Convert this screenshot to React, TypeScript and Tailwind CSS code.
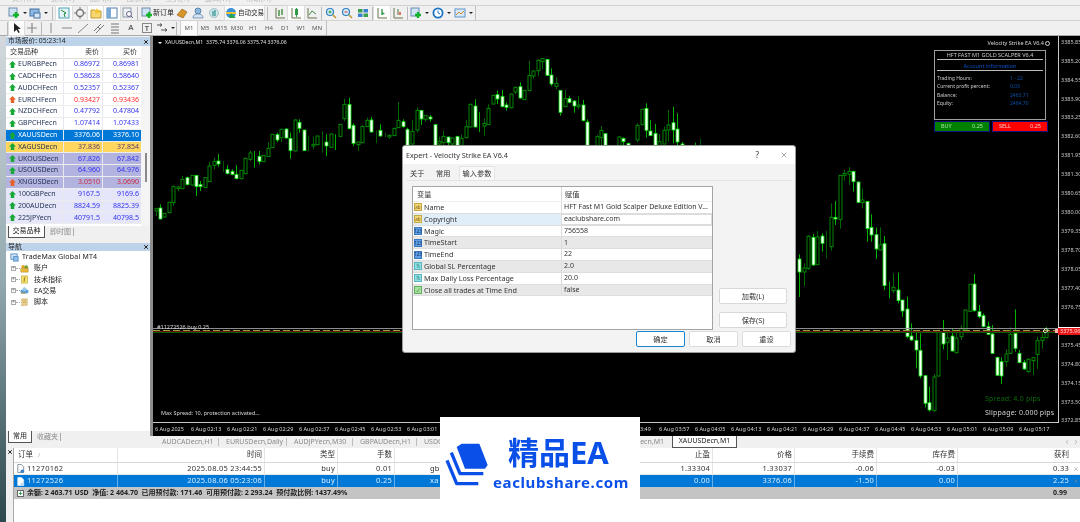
import type { ReactNode } from "react";
import { ChevronLeft, ChevronRight, X } from "lucide-react";

type Kind = "w" | "h" | "b" | "d";
type Candle = [number, number, number, number, number, Kind];

// candle rows were read off 3x crops, so each block has its own origin
const leftCandles: Candle[] = [
  [18, 515, 518, 525, 540, "h"], [30, 505, 516, 549, 550, "w"], [43, 530, 532, 543, 545, "h"], [57, 497, 499, 530, 532, "h"],
  [70, 448, 452, 500, 510, "h"], [84, 450, 453, 458, 465, "h"], [97, 420, 430, 458, 460, "h"], [111, 422, 425, 446, 448, "w"],
  [125, 418, 418, 447, 450, "h"], [138, 418, 418, 452, 480, "w"], [151, 435, 445, 452, 465, "w"], [165, 425, 425, 455, 456, "h"],
  [178, 377, 390, 437, 438, "h"], [192, 365, 376, 388, 400, "h"], [205, 354, 375, 384, 392, "w"], [218, 375, 390, 392, 408, "d"],
  [232, 388, 400, 413, 415, "w"], [245, 400, 406, 415, 418, "w"], [259, 388, 415, 428, 430, "w"], [273, 402, 403, 428, 430, "h"],
  [286, 365, 367, 413, 415, "h"], [300, 343, 351, 370, 375, "h"], [313, 345, 352, 356, 395, "b"], [327, 345, 361, 376, 385, "w"],
  [340, 357, 358, 377, 378, "h"], [354, 318, 337, 362, 363, "h"], [367, 295, 295, 335, 336, "h"], [381, 290, 296, 312, 318, "w"],
  [394, 278, 280, 305, 318, "h"], [408, 277, 279, 306, 308, "w"], [421, 290, 307, 344, 368, "w"], [435, 250, 252, 345, 346, "h"],
  [448, 250, 259, 277, 290, "w"], [462, 282, 282, 344, 345, "w"], [475, 300, 340, 344, 345, "d"], [489, 303, 325, 330, 340, "h"],
  [502, 299, 300, 326, 328, "h"], [516, 285, 311, 315, 350, "d"], [529, 295, 318, 330, 360, "w"], [543, 292, 294, 334, 335, "h"],
  [556, 295, 296, 298, 342, "b"], [570, 265, 265, 301, 302, "h"], [583, 188, 205, 248, 255, "h"], [597, 185, 205, 278, 280, "w"],
  [610, 262, 268, 322, 330, "w"], [624, 318, 318, 326, 345, "h"], [637, 268, 271, 320, 322, "h"], [651, 245, 253, 272, 273, "h"],
  [664, 243, 252, 288, 290, "w"], [678, 284, 285, 289, 322, "d"], [691, 265, 283, 300, 302, "w"], [705, 290, 294, 300, 304, "d"],
  [718, 295, 298, 303, 308, "h"], [732, 275, 277, 299, 300, "h"], [745, 198, 253, 275, 276, "h"], [759, 250, 257, 272, 275, "w"],
  [772, 275, 280, 330, 335, "w"],
];

const topCandles: Candle[] = [
  [36, 210, 244, 282, 284, "h"], [50, 172, 181, 240, 248, "h"], [63, 180, 181, 207, 225, "w"], [76, 195, 196, 208, 215, "h"],
  [90, 195, 201, 207, 215, "w"], [104, 222, 224, 300, 300, "w"], [117, 260, 274, 282, 300, "h"], [130, 243, 259, 278, 290, "h"],
  [144, 260, 261, 278, 285, "w"], [157, 263, 264, 282, 290, "h"], [171, 258, 259, 300, 300, "w"], [184, 253, 265, 300, 300, "h"],
  [198, 210, 230, 263, 265, "h"], [211, 160, 163, 231, 232, "h"], [225, 148, 168, 231, 232, "w"], [238, 186, 228, 233, 246, "b"],
  [252, 205, 220, 228, 257, "h"], [265, 163, 175, 224, 225, "h"], [279, 135, 136, 162, 163, "h"], [292, 122, 134, 147, 162, "w"],
  [306, 120, 139, 170, 172, "w"], [319, 157, 165, 172, 182, "w"], [333, 130, 132, 173, 176, "h"], [346, 110, 112, 126, 132, "h"],
  [360, 97, 110, 144, 146, "w"], [373, 120, 121, 149, 150, "h"], [387, 33, 76, 122, 123, "h"], [400, 60, 63, 78, 86, "h"],
  [414, 28, 31, 62, 78, "h"], [427, 24, 26, 35, 58, "h"], [441, 27, 28, 76, 78, "w"], [454, 55, 75, 102, 108, "w"],
  [468, 82, 100, 109, 118, "h"], [481, 120, 121, 187, 197, "w"], [495, 120, 145, 170, 172, "h"], [508, 137, 146, 157, 160, "w"],
  [522, 150, 153, 168, 188, "w"], [535, 138, 165, 170, 178, "h"], [549, 150, 165, 212, 214, "w"], [562, 208, 216, 300, 300, "w"],
  [590, 255, 260, 300, 300, "h"], [603, 228, 241, 263, 290, "h"], [616, 250, 251, 300, 300, "w"], [657, 258, 261, 300, 300, "h"],
  [670, 262, 265, 275, 290, "w"], [684, 278, 280, 300, 300, "w"], [711, 220, 226, 270, 276, "h"], [725, 177, 178, 224, 226, "h"],
  [738, 160, 175, 241, 263, "w"], [751, 210, 243, 257, 258, "w"], [765, 222, 250, 300, 300, "w"], [778, 252, 275, 300, 300, "h"],
  [792, 230, 241, 282, 283, "h"], [805, 180, 225, 240, 275, "h"], [819, 170, 218, 240, 280, "w"], [832, 190, 237, 276, 300, "w"],
  [846, 276, 282, 300, 300, "w"], [886, 278, 280, 300, 300, "b"], [900, 267, 268, 300, 300, "d"],
];

const riseCandles: Candle[] = [
  [57, 403, 417, 456, 531, "w"], [71, 430, 444, 456, 498, "h"], [84, 345, 349, 445, 450, "h"], [98, 342, 352, 435, 438, "w"],
  [111, 333, 351, 434, 435, "h"], [125, 340, 348, 370, 395, "w"], [138, 332, 370, 375, 415, "d"], [152, 250, 292, 380, 392, "h"],
  [165, 243, 292, 297, 315, "w"], [179, 165, 166, 298, 326, "h"], [192, 150, 160, 166, 182, "h"], [206, 141, 154, 163, 195, "h"],
  [219, 152, 154, 185, 215, "w"], [233, 185, 186, 247, 250, "w"], [246, 205, 240, 248, 265, "h"], [260, 243, 244, 326, 365, "w"],
  [273, 283, 322, 345, 365, "w"], [287, 323, 344, 387, 416, "w"], [300, 322, 375, 390, 392, "h"], [313, 348, 371, 497, 510, "w"],
];

const fallCandles: Candle[] = [
  [297, 35, 52, 55, 85, "b"], [310, 10, 52, 62, 70, "h"], [324, 8, 60, 92, 100, "w"], [337, 90, 90, 123, 140, "w"],
  [351, 80, 117, 200, 205, "w"], [364, 160, 198, 210, 213, "w"], [378, 180, 211, 240, 295, "w"], [391, 190, 241, 318, 325, "w"],
  [405, 315, 317, 400, 412, "w"], [418, 350, 398, 420, 425, "w"], [432, 312, 321, 422, 425, "h"], [445, 183, 187, 318, 320, "h"],
  [459, 150, 187, 222, 238, "w"], [472, 188, 204, 218, 270, "h"], [486, 175, 198, 243, 245, "w"], [499, 180, 204, 248, 250, "h"],
  [513, 165, 175, 200, 210, "h"], [526, 120, 120, 180, 182, "h"], [540, 42, 43, 124, 125, "h"], [553, 12, 42, 122, 125, "w"],
  [567, 105, 125, 140, 145, "w"], [580, 130, 137, 170, 172, "w"], [594, 155, 170, 193, 195, "w"], [607, 165, 192, 250, 252, "w"],
  [621, 260, 262, 316, 318, "w"], [634, 262, 275, 318, 342, "w"], [648, 238, 252, 275, 290, "h"], [661, 172, 193, 250, 252, "h"],
  [675, 118, 190, 235, 245, "w"], [688, 240, 250, 278, 280, "w"], [702, 270, 277, 297, 300, "w"], [715, 265, 268, 305, 308, "h"],
  [729, 262, 263, 272, 315, "h"], [742, 200, 212, 253, 296, "h"], [756, 190, 202, 212, 236, "h"], [769, 170, 175, 203, 205, "h"],
];

const quotes = [
  { s: "EURGBPecn", b: "0.86972", a: "0.86981", up: true, row: "n" },
  { s: "CADCHFecn", b: "0.58628", a: "0.58640", up: true, row: "n" },
  { s: "AUDCHFecn", b: "0.52357", a: "0.52367", up: true, row: "n" },
  { s: "EURCHFecn", b: "0.93427", a: "0.93436", up: false, row: "n" },
  { s: "NZDCHFecn", b: "0.47792", a: "0.47804", up: true, row: "n" },
  { s: "GBPCHFecn", b: "1.07414", a: "1.07433", up: true, row: "n" },
  { s: "XAUUSDecn", b: "3376.06", a: "3376.10", up: true, row: "sel" },
  { s: "XAGUSDecn", b: "37.836", a: "37.854", up: true, row: "gold" },
  { s: "UKOUSDecn", b: "67.826", a: "67.842", up: true, row: "oil" },
  { s: "USOUSDecn", b: "64.960", a: "64.976", up: true, row: "oil" },
  { s: "XNGUSDecn", b: "3.0510", a: "3.0690", up: false, row: "oil" },
  { s: "100GBPecn", b: "9167.5", a: "9169.6", up: true, row: "idx" },
  { s: "200AUDecn", b: "8824.59", a: "8825.39", up: true, row: "idx" },
  { s: "225JPYecn", b: "40791.5", a: "40798.5", up: true, row: "idx" },
];

const rowBg: Record<string, string> = {
  n: "bg-white",
  sel: "bg-[#0078d7] text-white",
  gold: "bg-[#ffd75e]",
  oil: "bg-[#b3b3e0]",
  idx: "bg-[#e6e6fa]",
};

const params = [
  { t: "ab", n: "Name", v: "HFT Fast M1 Gold Scalper Deluxe Edition V...", bg: "bg-white" },
  { t: "ab", n: "Copyright", v: "eaclubshare.com", bg: "bg-white", edit: true },
  { t: "123", n: "Magic", v: "756558", bg: "bg-white" },
  { t: "123", n: "TimeStart", v: "1", bg: "bg-[#e8e8e8]" },
  { t: "123", n: "TimeEnd", v: "22", bg: "bg-white" },
  { t: "½", n: "Global SL Percentage", v: "2.0", bg: "bg-[#e8e8e8]" },
  { t: "½", n: "Max Daily Loss Percentage", v: "20.0", bg: "bg-white" },
  { t: "✓", n: "Close all trades at Time End", v: "false", bg: "bg-[#e8e8e8]" },
];

const paramTag: Record<string, string> = {
  ab: "bg-[#f0d878] text-[#7a5a10] border-[#c8a840]",
  "123": "bg-[#5f9fe0] text-[#103070] border-[#3a78c0]",
  "½": "bg-[#8fdde0] text-[#106070] border-[#58b8c0]",
  "✓": "bg-[#a8e0a0] text-[#106010] border-[#60b060]",
};

// 3376.10 sits under the red bid tag
const prices = ["3385.85", "3385.20", "3384.55", "3383.90", "3383.25", "3382.60", "3381.95", "3381.30", "3380.65", "3380.00", "3379.35", "3378.70", "3378.05", "3377.40", "3376.75", "", "3375.45", "3374.80", "3374.15", "3373.50", "3372.85"];
// labels under the logo are left out, 03:49 only shows its tail
const times = ["6 Aug 02:13", "6 Aug 02:21", "6 Aug 02:29", "6 Aug 02:37", "6 Aug 02:45", "6 Aug 02:53", "6 Aug 03:01", "6 Aug 03:09", "", "", "", "", "", "6 Aug 03:57", "6 Aug 04:05", "6 Aug 04:13", "6 Aug 04:21", "6 Aug 04:29", "6 Aug 04:37", "6 Aug 04:45", "6 Aug 04:53", "6 Aug 05:01", "6 Aug 05:09", "6 Aug 05:17"];

const orderCols = "grid grid-cols-[104px_147px_73px_57px_75px_80px_80px_83px_82px_82px_81px_122px]";

function Candles({ data, ox, oy }: { data: Candle[]; ox: number; oy: number }) {
  return (
    <>
      {data.map(([x, wt, bt, bb, wb, k]) => {
        const cx = Math.round(ox + x / 3) + 0.5;
        const y = (v: number) => oy + v / 3;
        const wick = k === "w" ? "#00b400" : k === "b" ? "#00b000" : k === "d" ? "#005800" : "#006a00";
        return (
          <g key={x}>
            <line x1={cx} x2={cx} y1={y(wt)} y2={y(wb)} stroke={wick} />
            {k === "w" && <rect x={cx - 1.5} y={y(bt)} width={3} height={y(bb) - y(bt)} fill="#fff" stroke="#00e000" strokeWidth={0.8} />}
            {k === "h" && <rect x={cx - 1.5} y={y(bt)} width={3} height={y(bb) - y(bt)} fill="#000" stroke="#009400" strokeWidth={0.9} />}
          </g>
        );
      })}
    </>
  );
}

function Ico({ children }: { children: ReactNode }) {
  return (
    <svg viewBox="0 0 12 12" className="w-[12px] h-[12px]">
      {children}
    </svg>
  );
}

function Tool({ children, on, caret, w = "w-[16px]" }: { children: ReactNode; on?: boolean; caret?: boolean; w?: string }) {
  return (
    <div className={`${w} h-[14px] shrink-0 flex items-center justify-center gap-[1px] ${on ? "bg-[#fdfdfd] outline outline-[#dcdcdc]" : ""}`}>
      {children}
      {caret && <span className="w-0 h-0 border-x-[2px] border-t-[2px] border-x-transparent border-t-[#222] ml-[2px]" />}
    </div>
  );
}

function Sep({ tight }: { tight?: boolean }) {
  return <div className={`w-[1px] h-[13px] bg-[#b9b9b9] shrink-0 ${tight ? "mx-[1px]" : "mx-[3px]"}`} />;
}

const docPlus = (
  <Ico>
    <rect x="1" y="1" width="8" height="8" fill="#cfe3f5" stroke="#6a8cae" />
    <path d="M8 5v6M5 8h6" stroke="#12b52a" strokeWidth="2.4" />
  </Ico>
);
const bars = (
  <Ico>
    <path d="M2 1v10h9" stroke="#67764f" fill="none" />
    <path d="M5 3v6M8 2v6" stroke="#3f8a3f" strokeWidth="1.4" />
  </Ico>
);

function TopToolbar() {
  return (
    <div className="h-[16px] flex items-center pl-[6px] bg-[#f0f0f0] border-y border-[#d2d2d2]">
      <Tool w="w-[22px]" caret>{docPlus}</Tool>
      <Tool w="w-[21px]" caret><Ico><rect x="1" y="2" width="9" height="7" fill="#8cb8e4" stroke="#46719f" /><rect x="5" y="6" width="6" height="5" fill="#d7e6f5" stroke="#46719f" /></Ico></Tool>
      <Sep />
      <Tool on><Ico><rect x="1" y="1" width="10" height="10" fill="#e4f3f8" stroke="#4da0b8" /><path d="M3 3l5 3-2 1 1 3" stroke="#1e8a36" fill="none" /></Ico></Tool>
      <Tool><Ico><circle cx="6" cy="6" r="3.5" fill="none" stroke="#777" strokeWidth="1.4" /><path d="M6 0v3M6 9v3M0 6h3M9 6h3" stroke="#777" /></Ico></Tool>
      <Tool on><Ico><path d="M1 3h4l1 1h5v7H1z" fill="#f6d770" stroke="#c09a30" /><path d="M7 1l1 2 2 .3-1.5 1.4.4 2L7 5.8 5.2 6.7l.4-2L4 3.3 6 3z" fill="#f2c230" /></Ico></Tool>
      <Tool on><Ico><rect x="1" y="1" width="10" height="10" fill="#fff" stroke="#4d7fae" /><rect x="1" y="1" width="4" height="10" fill="#78a8d8" /></Ico></Tool>
      <Tool><Ico><rect x="1" y="1" width="8" height="9" fill="#eef2f5" stroke="#8a9aa8" /><circle cx="7" cy="7" r="2.5" fill="#fff" stroke="#668" /><path d="M9 9l2 2" stroke="#668" /></Ico></Tool>
      <Sep tight />
      <div className="flex items-center gap-[0px] w-[33px] ml-[2px] shrink-0">
        {docPlus}
        <span className="text-[7px] text-[#222] whitespace-nowrap">新订单</span>
      </div>
      <Tool><Ico><path d="M1 8l5-6 5 3-4 6z" fill="#d8952a" stroke="#8a5a10" strokeWidth="0.6" /></Ico></Tool>
      <Tool><Ico><circle cx="6" cy="4" r="3" fill="#8db8e0" stroke="#3a6a9a" strokeWidth="0.7" /><path d="M1 11c0-3 2-4 5-4s5 1 5 4z" fill="#d4e4f4" stroke="#5a7ca0" strokeWidth="0.7" /></Ico></Tool>
      <Tool><Ico><circle cx="6" cy="6" r="4.5" fill="#cfe6ea" stroke="#7aa" strokeWidth="0.6" /><path d="M5 4v5M7 3v6" stroke="#2e8f8a" strokeWidth="1.2" /></Ico></Tool>
      <div className="h-[14px] w-[39px] ml-[3px] flex items-center gap-[1px] bg-[#fbfbfb] outline outline-[#dcdcdc] shrink-0">
        <Ico><circle cx="6" cy="6" r="5" fill="#3a8fd8" /><path d="M1 6h10" stroke="#f1c232" strokeWidth="2" /><path d="M6 6l5 5H4z" fill="#28a745" /></Ico>
        <span className="text-[6.5px] text-[#222] whitespace-nowrap">自动交易</span>
      </div>
      <Sep />
      <div className="w-[1px]" />
      <Tool>{bars}</Tool>
      <Tool on><Ico><path d="M2 1v10h9" stroke="#67764f" fill="none" /><rect x="5" y="2" width="3" height="6" fill="#2f9a4a" /><path d="M6.5 1v9" stroke="#2f9a4a" /></Ico></Tool>
      <Tool><Ico><path d="M2 1v10h9" stroke="#67764f" fill="none" /><path d="M3 8l3-4 4 3" stroke="#3f8a3f" fill="none" /></Ico></Tool>
      <Sep tight />
      <Tool><Ico><circle cx="5" cy="5" r="3.5" fill="#d6ecfb" stroke="#2f7fbf" strokeWidth="1.2" /><path d="M8 8l3 3" stroke="#c79a2a" strokeWidth="1.6" /><path d="M3.5 5h3M5 3.5v3" stroke="#16a02e" /></Ico></Tool>
      <Tool><Ico><circle cx="5" cy="5" r="3.5" fill="#d6ecfb" stroke="#2f7fbf" strokeWidth="1.2" /><path d="M8 8l3 3" stroke="#c79a2a" strokeWidth="1.6" /><path d="M3.5 5h3" stroke="#d03020" /></Ico></Tool>
      <Tool><Ico><rect x="1" y="2" width="4.5" height="3.5" fill="#38a050" /><rect x="6.5" y="2" width="4.5" height="3.5" fill="#3a80d0" /><rect x="1" y="6.5" width="4.5" height="3.5" fill="#3a80d0" /><rect x="6.5" y="6.5" width="4.5" height="3.5" fill="#38a050" /></Ico></Tool>
      <Sep tight />
      <Tool on><Ico><path d="M2 1v10h9" stroke="#67764f" fill="none" /><path d="M6 2v6" stroke="#2f9a4a" strokeWidth="1.3" /><path d="M6 5l3 1.5-3 1.5" fill="#2f9a4a" /></Ico></Tool>
      <Tool><Ico><path d="M2 1v10h9" stroke="#67764f" fill="none" /><path d="M6 2v6" stroke="#7a8a60" strokeWidth="1.3" /><path d="M8 5v3" stroke="#d04020" strokeWidth="1.4" /></Ico></Tool>
      <Sep tight />
      <Tool w="w-[21px]" caret>{docPlus}</Tool>
      <Tool w="w-[22px]" caret><Ico><circle cx="6" cy="6" r="4.6" fill="#fff" stroke="#1b74c4" strokeWidth="1.8" /><path d="M6 3.5V6l2 1" stroke="#1b74c4" fill="none" /></Ico></Tool>
      <Tool w="w-[22px]" caret><Ico><rect x="1" y="2" width="10" height="8" fill="#d5e8fb" stroke="#5d94c8" /><path d="M2 8l3-3 2 2 3-3" stroke="#d68a30" fill="none" /></Ico></Tool>
      <div className="w-[1px] h-[15px] bg-[#c0c0c0] ml-[1px]" />
    </div>
  );
}

function BottomToolbar() {
  return (
    <div className="h-[15px] flex items-center pl-[6px] bg-[#f0f0f0] border-b border-[#a8a8a8]">
      <Sep tight />
      <Tool w="w-[15px]" on><Ico><path d="M3 1v9l2.5-2.2L7.5 11l1.3-.7-2-3.2H10z" fill="#222" /></Ico></Tool>
      <Tool><Ico><path d="M6 1v10M1 6h10" stroke="#888" strokeWidth="1.2" /></Ico></Tool>
      <Sep tight />
      <Tool><Ico><path d="M6 1v10" stroke="#999" strokeWidth="1.2" /></Ico></Tool>
      <Tool><Ico><path d="M1 6h10" stroke="#999" strokeWidth="1.2" /></Ico></Tool>
      <Tool><Ico><path d="M1 11L11 2" stroke="#888" /></Ico></Tool>
      <Tool><Ico><path d="M1 9L8 2M3 11l8-8M5 5l2 2" stroke="#777" /></Ico></Tool>
      <Tool><Ico><path d="M2 2h8M2 5h8M2 8h8M2 11h8" stroke="#777" /></Ico></Tool>
      <Tool><span className="text-[8px] font-bold text-[#666] leading-none font-['Liberation_Sans']">A</span></Tool>
      <Tool><div className="w-[10px] h-[10px] border border-[#888] flex items-center justify-center text-[7px] font-bold text-[#555] leading-none font-['Liberation_Sans']">T</div></Tool>
      <Tool w="w-[20px]" caret><Ico><path d="M1 3h5M6 3l-2-1.5M6 3L4 4.5M5 8h6M11 8L9 6.5M11 8L9 9.5" stroke="#555" /></Ico></Tool>
      <Sep tight />
      <div className="flex items-center ml-[3px]">
        {["M1", "M5", "M15", "M30", "H1", "H4", "D1", "W1", "MN"].map((t, i) => (
          <div key={t} className={`w-[16px] h-[14px] flex items-center justify-center text-[6px] text-[#555] ${i === 0 ? "bg-[#fbfbfb] outline outline-[#d0d0d0]" : ""}`}>{t}</div>
        ))}
      </div>
      <div className="w-[1px] h-[14px] bg-[#c0c0c0] ml-[1px]" />
    </div>
  );
}

function Arrow({ up }: { up: boolean }) {
  const c = up ? "#18a838" : "#e8602a";
  return (
    <svg viewBox="0 0 8 8" className="w-[7px] h-[7px] shrink-0">
      <path d="M4 0l4 4H6v4H2V4H0z" fill={c} />
    </svg>
  );
}

function MarketWatch() {
  return (
    <div className="h-[202px] shrink-0 flex flex-col">
      <div className="h-[9px] mt-[1px] bg-[#bcd3ea] flex items-center justify-between pl-[2px] pr-[1px] shrink-0">
        <span className="text-[6.8px] text-[#222]">市场报价: 05:23:14</span>
        <X size={6} strokeWidth={4} className="text-[#222]" />
      </div>
      <div className="flex flex-1 bg-white min-h-0">
        <div className="w-[135px] flex flex-col">
          <div className="h-[13px] flex text-[7px] text-[#333] items-center border-b border-[#dedede] shrink-0">
            <div className="w-[57px] pl-[4px]">交易品种</div>
            <div className="w-[39px] text-right pr-[3px] border-l border-[#e8e8e8]">卖价</div>
            <div className="w-[39px] text-right pr-[4px] border-l border-[#e8e8e8]">买价</div>
          </div>
          {quotes.map((q) => (
            <div key={q.s} className={`h-[11.8px] shrink-0 flex items-center text-[7px] border-b border-[#ececec] ${rowBg[q.row]}`}>
              <div className={`w-[57px] pl-[3px] flex items-center gap-[2px] ${q.row === "sel" ? "text-white" : "text-[#1f2f4f]"}`}>
                <Arrow up={q.up} />
                <span>{q.s}</span>
              </div>
              {[q.b, q.a].map((p, i) => (
                <div key={i} className={`w-[39px] pr-[2px] text-right border-l border-[#e8e8f0] ${q.row === "sel" ? "text-white" : q.row === "gold" ? "text-[#5a3a70]" : q.up ? "text-[#3333ee]" : q.row === "oil" ? "text-[#c8283c]" : "text-[#ff2a2a]"}`}>{p}</div>
              ))}
            </div>
          ))}
        </div>
        <div className="flex-1 bg-[#f4f4f4] flex justify-center pt-[107px]">
          <div className="w-[2px] h-[29px] bg-[#8a8a8a]" />
        </div>
      </div>
      <PanelTabs active="交易品种" other="即时图" w="w-[37px]" />
    </div>
  );
}

function PanelTabs({ active, other, w }: { active: string; other: string; w: string }) {
  return (
    <div className="h-[12px] bg-[#f0f0f0] flex pl-[2px] text-[7px] shrink-0">
      <div className={`${w} bg-white border-x border-b border-[#555] flex items-center justify-center text-[#222]`}>{active}</div>
      <div className="flex items-center pl-[5px] pr-[2px] text-[#8c8c8c] border-r border-[#aaa] my-[2px]">{other}</div>
    </div>
  );
}

const navIcons: Record<string, ReactNode> = {
  账户: <><circle cx="3.5" cy="3" r="2" fill="#e0a020" /><circle cx="7" cy="3.5" r="2" fill="#70a030" /><rect x="1" y="5" width="8" height="4" fill="#e8b838" stroke="#a87818" strokeWidth="0.5" /></>,
  技术指标: <><rect x="1.5" y="1" width="7" height="8" fill="#f4e06a" stroke="#b8a030" strokeWidth="0.6" /><path d="M6 2.5C4.5 2.5 5 5 4.5 7.5" stroke="#806010" fill="none" /></>,
  EA交易: <><ellipse cx="5" cy="6" rx="4.5" ry="2.5" fill="#5a9fd8" /><circle cx="5" cy="3.5" r="2.2" fill="#9cc8ea" /><path d="M1 8h5" stroke="#d09a30" /></>,
  脚本: <><path d="M2 1h6v7H3.5L2 9z" fill="#f0d898" stroke="#b89040" strokeWidth="0.6" /><path d="M3.5 3h3M3.5 5h3" stroke="#a07828" strokeWidth="0.6" /></>,
};

function Navigator() {
  return (
    <div className="flex-1 flex flex-col mt-[5px] min-h-0">
      <div className="h-[8px] bg-[#bcd3ea] flex items-center justify-between pl-[2px] pr-[1px] shrink-0">
        <span className="text-[7px] text-[#222]">导航</span>
        <X size={6} strokeWidth={4} className="text-[#222]" />
      </div>
      <div className="flex-1 bg-white pl-[4px] text-[7px] text-[#222]">
        <div className="h-[12px] flex items-center gap-[3px]">
          <svg viewBox="0 0 10 10" className="w-[9px] h-[9px]"><rect x="1" y="1" width="7" height="6" fill="#cfe3f5" stroke="#5a90c8" /><rect x="4" y="4" width="5" height="5" fill="#8fbde8" stroke="#5a90c8" /></svg>
          <span className="tracking-[0.2px]">TradeMax Global MT4</span>
        </div>
        {Object.keys(navIcons).map((t) => (
          <div key={t} className="h-[11.2px] flex items-center pl-[1px]">
            <div className="w-[5px] h-[5px] border border-[#aaa] flex items-center justify-center text-[5px] leading-none text-[#666]">+</div>
            <div className="w-[4px] border-t border-dotted border-[#aaa]" />
            <svg viewBox="0 0 10 10" className="w-[9px] h-[9px] mr-[5px]">{navIcons[t]}</svg>
            <span>{t}</span>
          </div>
        ))}
      </div>
      <PanelTabs active="常用" other="收藏夹" w="w-[24px]" />
    </div>
  );
}

function Chart() {
  return (
    <div className="relative h-[400px] shrink-0 bg-black overflow-hidden border-l-[3px] border-[#8e8e8e]">
      <div className="flex h-[387px]">
        <div className="flex-1 relative border-b border-[#c8c8c8] border-r">
          <svg viewBox="153 36 905 387" className="block w-[905px] h-[387px]">
            <Candles data={leftCandles} ox={150} oy={36} />
            <Candles data={topCandles} ox={400} oy={50} />
            <Candles data={riseCandles} ox={780} oy={120} />
            <Candles data={fallCandles} ox={790} oy={270} />
            <line x1="153" x2="1058" y1="328.5" y2="328.5" stroke="#8c8c8c" />
            <line x1="153" x2="1058" y1="330.5" y2="330.5" stroke="#8fa53a" strokeDasharray="7 3" />
            <line x1="153" x2="1058" y1="331.5" y2="331.5" stroke="#701010" />
            <line x1="153" x2="1058" y1="332.5" y2="332.5" stroke="#006000" />
            <rect x="1055" y="329" width="3" height="4" fill="#ffb0b0" />
            <path d="M1043 331l3-3 2 3-3 2z" fill="none" stroke="#c8e8c8" />
          </svg>
        </div>
        <div className="w-[22px] pl-[2px] -mt-[3px] flex flex-col text-[5.5px] text-[#c8c8c8] shrink-0">
          {prices.map((p, i) => (
            <div key={i} className="h-[18.95px] shrink-0 flex items-center leading-none">{p}</div>
          ))}
        </div>
      </div>
      <div className="h-[13px] flex items-center text-[5.5px] text-[#d8d8d8]">
        <div className="w-[38px] shrink-0 whitespace-nowrap pl-[2px]">6 Aug 2025</div>
        {times.map((t, i) => (
          <div key={i} className={`w-[36px] shrink-0 whitespace-nowrap ${i === 12 ? "pl-[17px]" : ""}`}>{i === 12 ? "3:49" : t}</div>
        ))}
      </div>

      <div className="absolute left-[4px] top-[3px] text-[5.2px] text-[#e0e0e0] whitespace-pre flex items-center gap-[2px]">
        <span className="w-0 h-0 border-x-[2px] border-t-[2px] border-x-transparent border-t-white mx-[1px]" />
        XAUUSDecn,M1  3375.74 3376.06 3375.74 3376.06
      </div>
      <div className="absolute left-[4px] top-[287px] text-[5.5px] text-[#dcdcdc]">#11272526 buy 0.25</div>
      <div className="absolute left-[8px] top-[373px] text-[5.5px] text-[#d8d8d8]">Max Spread: 10, protection activated...</div>
      <div className="absolute left-[832px] top-[358px] text-[7px] text-[#0c6a0c] tracking-[0.2px]">Spread: 4.0 pips</div>
      <div className="absolute left-[832px] top-[372px] text-[7px] text-[#d4d4d4] tracking-[0.2px] whitespace-nowrap">Slippage: 0.000 pips</div>
      <div className="absolute left-[905px] top-[291px] w-[22px] h-[8px] bg-[#e81818] border-t border-white text-[5.5px] leading-[7px] pl-[2px] text-[#ffd0d0]">3375.96</div>

      <div className="absolute left-[781px] top-[4px] w-[116px] flex flex-col">
        <div className="flex justify-end items-center gap-[1px] text-[5.5px] text-[#d8d8d8] h-[6px]">
          Velocity Strike EA V6.4
          <span className="w-[5px] h-[5px] rounded-full border border-[#ccc]" />
        </div>
        <div className="w-[112px] h-[70px] mt-[4px] border border-[#a0a0a0] px-[2px] text-[5px] text-[#cccccc]">
          <div className="h-[9px] text-center leading-[9px] border-b border-[#bcbcbc] text-[5.5px]">HFT FAST M1 GOLD SCALPER V6.4</div>
          <div className="h-[11px] text-center leading-[13px] border-b border-[#bcbcbc] text-[#0a50c8] text-[5.5px]">Account information</div>
          <div className="pt-[3px]">
            {[
              ["Trading Hours:", "1 - 22"],
              ["Current profit percent:", "0.03"],
              ["Balance:", "2463.71"],
              ["Equity:", "2464.70"],
            ].map(([k, v]) => (
              <div key={k} className="h-[8.5px] flex items-center">
                <span className="w-[73px]">{k}</span>
                <span className="text-[#0a50a8]">{v}</span>
              </div>
            ))}
          </div>
        </div>
        <div className="flex gap-[2px] mt-[1px] text-[5.5px]">
          <div className="w-[56px] h-[11px] bg-[#008000] border border-[#101080] flex items-center justify-between px-[6px] text-[#a8e8a8]"><span>BUY</span><span>0.25</span></div>
          <div className="w-[56px] h-[11px] bg-[#ff0000] border border-[#101080] flex items-center justify-between px-[6px] text-[#ffd0d0]"><span>SELL</span><span>0.25</span></div>
        </div>
      </div>
    </div>
  );
}

function ChartTabs() {
  const tabs = [
    { t: "AUDCADecn,H1", w: "w-[64px]" },
    { t: "EURUSDecn,Daily", w: "w-[68px]" },
    { t: "AUDJPYecn,M30", w: "w-[66px]" },
    { t: "GBPAUDecn,H1", w: "w-[64px]" },
    { t: "USDC", w: "w-[62px]" },
    { t: "", w: "w-[63px]" },
    { t: "", w: "w-[63px]" },
    { t: "ecn,M1", w: "w-[63px] justify-end pr-[4px] border-r-0" },
  ];
  return (
    <div className="h-[12px] bg-[#f0f0f0] flex items-stretch text-[7px] text-[#8a8a8a] pl-[5px]">
      {tabs.map((t, i) => (
        <div key={i} className={`${t.w} shrink-0 whitespace-nowrap flex items-center pl-[7px] border-r border-[#bcbcbc] my-[2px]`}>{t.t}</div>
      ))}
      <div className="w-[65px] ml-[4px] bg-white border-x border-b border-[#555] flex items-center justify-center text-[#222] whitespace-nowrap shrink-0">XAUUSDecn,M1</div>
      <div className="ml-auto flex items-center gap-[3px] pr-[1px] text-[#777]">
        <ChevronLeft size={6} />
        <ChevronRight size={6} />
      </div>
    </div>
  );
}

function Terminal() {
  const header = ["订单", "时间", "类型", "手数", "", "", "", "止盈", "价格", "手续费", "库存费", "获利"];
  const rows = [
    { sel: false, v: ["11270162", "2025.08.05 23:44:55", "buy", "0.01", "gb", "", "", "1.33304", "1.33037", "-0.06", "-0.03", "0.33"] },
    { sel: true, v: ["11272526", "2025.08.06 05:23:06", "buy", "0.25", "xa", "", "", "0.00", "3376.06", "-1.50", "0.00", "2.25"] },
  ];
  return (
    <div className="flex-1 flex bg-white text-[7.5px] min-h-0">
      <div className="w-[7px] bg-[#f0f0f0] pt-[1px] flex justify-center">
        <X size={6} strokeWidth={4} className="text-[#222]" />
      </div>
      <div className="flex-1 border-l border-[#a8a8a8] min-w-0">
        <div className={`${orderCols} h-[15px] items-center text-[#333] border-b border-[#d8d8d8]`}>
          {header.map((h, i) => (
            <div key={i} className={`h-full flex items-center border-r border-[#e4e4e4] px-[2px] ${i === 0 ? "pl-[4px]" : "justify-end"} ${i === 11 ? "pr-[11px] border-r-0" : ""}`}>
              {h}
              {i === 0 && <span className="ml-[5px] text-[6px] text-[#aaa]">/</span>}
            </div>
          ))}
        </div>
        {rows.map((r) => (
          <div key={r.v[0]} className={`${orderCols} h-[12px] items-center tracking-[0.25px] ${r.sel ? "bg-[#0078d7] text-[#d8ecff]" : "text-[#333] border-b border-[#e8e8e8]"}`}>
            {r.v.map((c, i) => (
              <div key={i} className={`h-full flex items-center border-r px-[2px] ${r.sel ? "border-[#66aee6]" : "border-[#e4e4e4]"} ${i === 0 ? "pl-[2px] gap-[2px]" : i === 4 ? "pl-[35px]" : "justify-end"} ${i === 11 ? "pr-[11px] border-r-0 relative" : ""}`}>
                {i === 0 && (
                  <svg viewBox="0 0 10 10" className="w-[9px] h-[9px] shrink-0">
                    <path d="M2 .5h4L8.5 3v6.5H2z" fill="#fff" stroke={r.sel ? "#cfe6fa" : "#7a8a9a"} />
                    <circle cx="7" cy="8" r="2" fill={r.sel ? "#bcd8f4" : "#3a80d0"} />
                  </svg>
                )}
                {c}
                {i === 11 && <X size={6} strokeWidth={2} className="absolute right-[1px] text-[#8a8a8a]" />}
              </div>
            ))}
          </div>
        ))}
        <div className="h-[12px] bg-[#c4c4c4] flex items-center justify-between font-bold text-[#222] pl-[3px] pr-[13px] text-[7px]">
          <div className="flex items-center gap-[3px] whitespace-pre">
            <div className="w-[7px] h-[7px] bg-white border border-[#666] flex items-center justify-center text-[#109030] text-[7px] leading-none">+</div>
            <span>余额: 2 463.71 USD  净值: 2 464.70  已用预付款: 171.46  可用预付款: 2 293.24  预付款比例: 1437.49%</span>
          </div>
          <span>0.99</span>
        </div>
      </div>
    </div>
  );
}

function ParamDialog() {
  return (
    <div className="absolute left-[402px] top-[145px] w-[394px] h-[208px] rounded-[3px] bg-[#f3f3f3] border border-[#9a9a9a] flex flex-col text-[7.2px] text-[#333]">
      <div className="h-[18px] bg-white rounded-t-[3px] flex items-center justify-between pl-[3px] pr-[7px] shrink-0">
        <span className="text-[#333]">Expert - Velocity Strike EA V6.4</span>
        <div className="flex items-center gap-[21px] text-[#333]">
          <span className="text-[8px]">?</span>
          <X size={8} strokeWidth={1.3} />
        </div>
      </div>
      <div className="h-[16px] pt-[4px] flex items-end pl-[3px] shrink-0">
        <div className="w-[26px] h-[13px] flex items-center pl-[4px]">关于</div>
        <div className="w-[27px] h-[13px] flex items-center pl-[4px]">常用</div>
        <div className="w-[36px] h-[14px] flex items-center justify-center bg-[#f9f9f9] border-x border-t border-[#e4e4e4]">输入参数</div>
      </div>
      <div className="flex-1 flex flex-col border-t border-[#e4e4e4] mx-[3px] min-h-0">
        <div className="flex pt-[5px] pl-[6px] h-[150px] shrink-0">
          <div className="w-[301px] h-[144px] border border-[#a4a4a4] bg-white flex flex-col">
            <div className="h-[15px] flex items-center border-b border-[#f0f0f0] shrink-0">
              <div className="w-[148px] pl-[4px]">变量</div>
              <div className="flex-1 pl-[3px] border-l border-[#dcdcdc] h-full flex items-center">赋值</div>
            </div>
            {params.map((p) => (
              <div key={p.n} className={`h-[11.8px] shrink-0 flex items-center border-b border-[#dedede] ${p.bg}`}>
                <div className={`w-[148px] h-full flex items-center pl-[1px] gap-[2px] ${p.edit ? "bg-[#e0eefa]" : ""}`}>
                  <div className={`w-[8px] h-[8px] border text-[4.5px] leading-none flex items-center justify-center shrink-0 ${paramTag[p.t]}`}>{p.t}</div>
                  <span className="whitespace-nowrap">{p.n}</span>
                </div>
                <div className={`flex-1 min-w-0 h-full flex items-center pl-[2px] border-l border-[#dcdcdc] text-[7px] whitespace-nowrap overflow-hidden ${p.edit ? "border-b border-r border-[#a0a0a0] border-t" : ""}`}>{p.v}</div>
              </div>
            ))}
          </div>
          <div className="ml-[6px] pt-[102px] flex flex-col gap-[8px]">
            <button className="w-[68px] h-[16px] bg-white border border-[#d8d8d8] rounded-[2px]">加载(L)</button>
            <button className="w-[68px] h-[16px] bg-white border border-[#d8d8d8] rounded-[2px]">保存(S)</button>
          </div>
        </div>
      </div>
      <div className="h-[21px] flex justify-end items-start gap-[4px] pr-[4px] shrink-0">
        <button className="w-[49px] h-[16px] bg-white border border-[#1a84d4] rounded-[2px]">确定</button>
        <button className="w-[49px] h-[16px] bg-white border border-[#dcdcdc] rounded-[2px]">取消</button>
        <button className="w-[49px] h-[16px] bg-white border border-[#dcdcdc] rounded-[2px]">重设</button>
      </div>
    </div>
  );
}

function Logo() {
  return (
    <div className="absolute left-[440px] top-[417px] w-[200px] h-[105px] bg-white flex pl-[5px] pt-[25px]">
      <svg viewBox="15 80 135 135" className="w-[45px] h-[45px] shrink-0">
        <path d="M50 95l15-10h53l25 64-8 11H75z" fill="#0a50e8" />
        <path d="M34 112l26 63h70" fill="none" stroke="#0a50e8" strokeWidth="10" strokeLinejoin="round" />
        <path d="M21 135l29 70h65" fill="none" stroke="#0a50e8" strokeWidth="10" strokeLinejoin="round" />
      </svg>
      <div className="ml-[3px] -mt-[9px] flex flex-col text-[#0a50e8]">
        <div className="text-[31px] font-bold leading-[38px] pl-[15px] whitespace-nowrap">精品EA</div>
        <div className="text-[15px] font-bold leading-[16px] mt-[3px] tracking-[0.6px] whitespace-nowrap">eaclubshare.com</div>
      </div>
    </div>
  );
}

export default function App() {
  return (
    <div className="relative w-[1080px] h-[522px] overflow-hidden bg-[#f0f0f0] flex flex-col blur-[0.35px] font-['Noto_Sans','Noto_Sans_CJK_SC',sans-serif]">
      <div className="h-[5px] overflow-hidden flex gap-[15px] pl-[12px] text-[7.5px] text-[#bdbdbd] leading-none">
        {["文件(F)", "显示(V)", "插入(I)", "图表(C)", "工具(T)", "窗口(W)", "帮助(H)"].map((m) => (
          <span key={m} className="-mt-[5px]">{m}</span>
        ))}
      </div>
      <TopToolbar />
      <BottomToolbar />
      <div className="flex-1 flex min-h-0">
        <div className="w-[6px] bg-linear-to-b from-[#d3d9dd] via-[#93aab0] to-[#2c474d]" />
        <div className="flex-1 flex flex-col min-w-0">
          <div className="h-[412px] flex shrink-0">
            <div className="w-[144px] shrink-0 flex flex-col bg-[#f0f0f0] pb-[5px]">
              <MarketWatch />
              <Navigator />
            </div>
            <div className="flex-1 flex flex-col min-w-0">
              <Chart />
              <ChartTabs />
            </div>
          </div>
          <Terminal />
        </div>
      </div>
      <ParamDialog />
      <Logo />
    </div>
  );
}
